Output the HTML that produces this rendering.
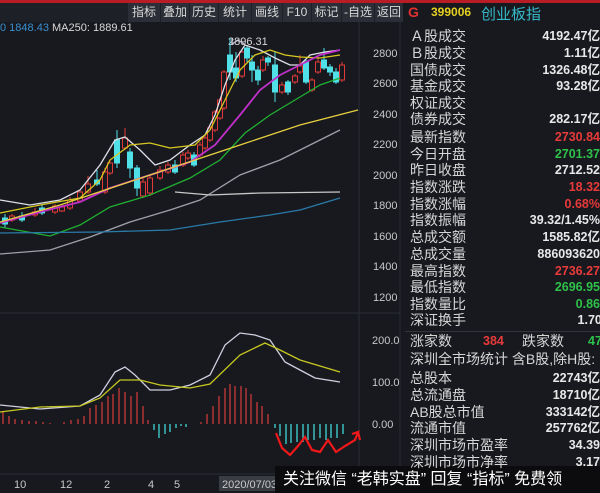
<!DOCTYPE html>
<html><head><meta charset="utf-8"><style>
*{margin:0;padding:0;box-sizing:border-box}
body{width:600px;height:493px;overflow:hidden;background:#17191f;font-family:"Liberation Sans","Noto Sans CJK SC",sans-serif;position:relative}
.abs{position:absolute}
.tb{position:absolute;top:3px;height:19px;background:#2b2e36;color:#d8d8d8;font-size:12px;line-height:19px;text-align:center}
.row{position:absolute;left:410px;width:200px;height:17px;font-size:14px;line-height:17px;color:#d6d6d6;white-space:nowrap}
.row b{position:absolute;right:10px;font-weight:bold;font-size:12.5px;color:#e8e8e8}
.r{color:#e83a3a!important}.g{color:#2fc14a!important}
</style></head><body>
<div class="abs" style="left:0;top:0;width:600px;height:3px;background:#b81c24"></div>
<div class="abs" style="left:0;top:3px;width:402px;height:19px;background:#1e2027"></div>
<div class="tb" style="left:128px;width:32px">指标</div>
<div class="tb" style="left:161px;width:28px">叠加</div>
<div class="tb" style="left:190px;width:28px">历史</div>
<div class="tb" style="left:219px;width:32px">统计</div>
<div class="tb" style="left:252px;width:30px">画线</div>
<div class="tb" style="left:283px;width:28px">F10</div>
<div class="tb" style="left:312px;width:29px">标记</div>
<div class="tb" style="left:342px;width:32px">-自选</div>
<div class="tb" style="left:375px;width:28px">返回</div>
<div class="abs" style="left:408px;top:4px;color:#e03030;font-size:14px;font-weight:bold">G</div>
<div class="abs" style="left:431px;top:5px;color:#e6d020;font-size:12px;font-weight:bold">399006</div>
<div class="abs" style="left:481px;top:3px;color:#35b8c8;font-size:15px">创业板指</div>
<div class="abs" style="left:0;top:22px;font-size:11px;color:#3a8fd0">0 1848.43 <span style="color:#d8d8d8">MA250: 1889.61</span></div>
<div class="abs" style="left:228px;top:36px;font-size:11px;color:#d8d8d8">2896.31</div>
<svg class="abs" style="left:0;top:0" width="600" height="493">
<g stroke="#2a2d35" stroke-width="1">
<line x1="359" y1="22" x2="359" y2="470"/><line x1="400" y1="22" x2="400" y2="493"/>
<line x1="0" y1="313" x2="400" y2="313"/><line x1="0" y1="474" x2="400" y2="474"/>
</g>
<g font-size="11" fill="#c8c8c8" font-family="Liberation Sans">
<text x="373" y="57">2800</text><text x="373" y="87">2600</text><text x="373" y="118">2400</text><text x="373" y="148">2200</text><text x="373" y="179">2000</text><text x="373" y="209">1800</text><text x="373" y="240">1600</text><text x="373" y="270">1400</text><text x="373" y="301">1200</text>
<text x="372" y="344">200.0</text><text x="372" y="386">100.0</text><text x="372" y="428">0.00</text>
<text x="14" y="488">10</text><text x="60" y="488">12</text><text x="104" y="488">2</text><text x="148" y="488">4</text><text x="174" y="488">5</text>
<rect x="219" y="476" width="58" height="15" fill="#3a3c44"/><text x="222" y="488">2020/07/03</text>
</g>
<g id="c"></g>
<g fill="none" stroke-width="1.3">
<polyline stroke="#e0e0e8" points="0,200 30,205 60,200 80,190 100,165 115,140 125,137 140,150 155,165 170,160 190,145 205,135 215,115 225,85 235,60 245,45 260,50 275,58 290,65 300,65 310,55 325,52 340,50"/>
<polyline stroke="#d8c820" points="0,213 40,205 80,198 100,180 110,160 130,145 150,143 170,148 195,145 210,130 225,100 240,70 255,55 270,50 285,55 300,57 320,58 340,55"/>
<polyline stroke="#c030c8" stroke-width="1.8" points="0,223 40,212 80,202 110,188 150,175 190,162 215,145 240,115 260,90 280,75 300,65 320,55 340,50"/>
<polyline stroke="#20b030" points="0,227 50,236 80,225 110,207 150,195 190,178 220,160 245,133 270,115 300,97 320,85 340,78"/>
<polyline stroke="#e8d040" points="0,222 60,205 120,185 180,165 240,145 300,125 358,110"/>
<polyline stroke="#a0a0a8" points="0,254 50,250 90,237 130,222 170,210 200,200 240,175 280,160 320,140 340,130"/>
<polyline stroke="#c8c8c8" points="175,192 210,195 260,193 340,192"/>
<polyline stroke="#2a7aa8" points="0,233 100,232 170,230 220,222 270,215 300,210 340,198"/>
<polyline stroke="#c8c8d8" points="232,38 232,44 238,40 244,44"/>
</g>
<g id="h"></g>
<g fill="none" stroke-width="1.3">
<polyline stroke="#d0d0e0" points="0,405 40,409 80,406 100,395 115,372 125,367 135,375 150,390 170,390 190,385 210,375 225,345 240,333 255,335 270,340 285,362 300,370 315,378 340,382"/>
<polyline stroke="#c8c820" points="0,412 40,407 80,406 100,398 120,380 140,380 160,385 190,388 210,384 240,355 265,343 280,350 300,360 340,372"/>
</g>
<polyline fill="none" stroke="#f01818" stroke-width="2.2" points="276,433 282,448 290,455 298,446 305,437 312,450 320,452 328,440 336,452 345,446 355,440 358,432 352,434 358,432 360,440"/>
</svg>
<div class="abs" style="left:275px;top:466px;width:325px;height:27px;background:#0c0c0e;color:#fff;font-size:16px;line-height:27px;padding-left:8px;white-space:nowrap">关注微信 “老韩实盘” 回复 “指标” 免费领</div>
<div class="abs" style="left:405px;top:331px;width:195px;height:1px;background:#33363e"></div>
<div class="row" style="top:28px">Ａ股成交<b>4192.47亿</b></div>
<div class="row" style="top:45px">Ｂ股成交<b>1.11亿</b></div>
<div class="row" style="top:62px">国债成交<b>1326.48亿</b></div>
<div class="row" style="top:78px">基金成交<b>93.28亿</b></div>
<div class="row" style="top:95px">权证成交</div>
<div class="row" style="top:111px">债券成交<b>282.17亿</b></div>
<div class="row" style="top:129px">最新指数<b class="r">2730.84</b></div>
<div class="row" style="top:146px">今日开盘<b class="g">2701.37</b></div>
<div class="row" style="top:162px">昨日收盘<b>2712.52</b></div>
<div class="row" style="top:179px">指数涨跌<b class="r">18.32</b></div>
<div class="row" style="top:196px">指数涨幅<b class="r">0.68%</b></div>
<div class="row" style="top:212px">指数振幅<b>39.32/1.45%</b></div>
<div class="row" style="top:229px">总成交额<b>1585.82亿</b></div>
<div class="row" style="top:246px">总成交量<b>886093620</b></div>
<div class="row" style="top:263px">最高指数<b class="r">2736.27</b></div>
<div class="row" style="top:279px">最低指数<b class="g">2696.95</b></div>
<div class="row" style="top:296px">指数量比<b class="g">0.86</b></div>
<div class="row" style="top:312px">深证换手<b style="right:-3px">1.70%</b></div>
<div class="row" style="top:333px">涨家数<span class="r" style="position:absolute;left:73px;font-weight:bold;font-size:12.5px">384</span><span style="position:absolute;left:112px">跌家数</span><span class="g" style="position:absolute;left:178px;font-weight:bold;font-size:12.5px">47</span></div>
<div class="row" style="top:351px">深圳全市场统计 含B股,除H股:</div>
<div class="row" style="top:370px">总股本<b>22743亿</b></div>
<div class="row" style="top:387px">总流通盘<b>18710亿</b></div>
<div class="row" style="top:404px">AB股总市值<b>333142亿</b></div>
<div class="row" style="top:420px">流通市值<b>257762亿</b></div>
<div class="row" style="top:437px">深圳市场市盈率<b>34.39</b></div>
<div class="row" style="top:454px">深圳市场市净率<b>3.17</b></div>
<script>
var C=[[5,218,224,214,228,0],[12,220,216,214,222,1],[22,216,220,212,222,0],[35,215,212,208,217,1],[42,208,213,205,215,0],[55,212,206,204,214,1],[62,211,207,205,212,1],[70,208,200,197,210,1],[80,201,192,190,203,1],[88,192,184,176,194,1],[97,180,184,170,186,0],[105,192,172,168,194,1],[110,173,163,160,175,1],[117,140,163,130,168,0],[125,148,138,128,150,1],[130,152,168,148,178,0],[137,168,188,165,196,0],[143,196,182,178,198,1],[150,193,178,175,196,1],[160,178,170,166,180,1],[168,172,165,162,174,1],[175,165,172,160,174,0],[183,165,155,152,167,1],[188,158,153,150,160,1],[194,155,165,152,167,0],[200,155,145,142,157,1],[205,148,138,135,150,1],[210,140,128,126,142,1],[215,130,112,110,132,1],[220,118,100,98,120,1],[224,108,72,70,110,1],[230,55,72,38,80,0],[236,68,78,52,82,0],[242,76,52,50,78,1],[247,48,58,45,62,0],[252,62,70,55,82,0],[258,70,80,66,85,0],[263,70,60,56,72,1],[268,58,62,56,66,0],[275,65,92,52,102,0],[282,92,85,82,94,1],[288,82,92,80,95,0],[295,82,76,74,84,1],[300,72,66,55,74,1],[306,62,82,60,84,0],[312,90,80,78,92,1],[318,72,62,58,74,1],[324,60,68,48,70,0],[330,67,72,64,76,0],[336,72,82,68,84,0],[342,80,65,62,82,1]];
var s='';C.forEach(function(c){var col=c[5]?'#e23a3a':'#4fe0e8';var t=Math.min(c[1],c[2]),b=Math.max(c[1],c[2]);s+='<line x1="'+c[0]+'" y1="'+c[3]+'" x2="'+c[0]+'" y2="'+c[4]+'" stroke="'+col+'"/>';s+='<rect x="'+(c[0]-2.5)+'" y="'+t+'" width="5" height="'+Math.max(1,b-t)+'" fill="'+(c[5]?'#17191f':col)+'" stroke="'+col+'"/>';});
document.getElementById('c').innerHTML=s;
var h='',z=424;
function bar(x,v){h+='<line x1="'+x+'" y1="'+z+'" x2="'+x+'" y2="'+(z-v)+'" stroke="'+(v>0?'#c03838':'#40c8c8')+'" stroke-width="1.4"/>';}
[[3,12],[9,8],[15,5],[22,4],[29,3],[36,3],[43,2],[50,1],[64,2],[71,4],[78,5],[84,8],[90,16],[96,19],[102,22],[108,28],[113,30],[119,36],[125,32],[131,28],[137,32],[143,18],[148,4],[142,0],[154,-6],[159,-14],[165,-10],[170,-8],[176,-4],[181,-2],[186,-3],[201,2],[207,10],[213,18],[219,28],[225,36],[230,40],[235,38],[241,38],[246,36],[251,30],[257,22],[262,18],[268,10],[275,-4],[280,-12],[286,-20],[291,-19],[297,-18],[303,-18],[308,-16],[314,-16],[320,-14],[326,-16],[331,-14],[337,-14],[343,-10]].forEach(function(b){if(b[1])bar(b[0],b[1]);});
document.getElementById('h').innerHTML=h;
</script>
</body></html>
